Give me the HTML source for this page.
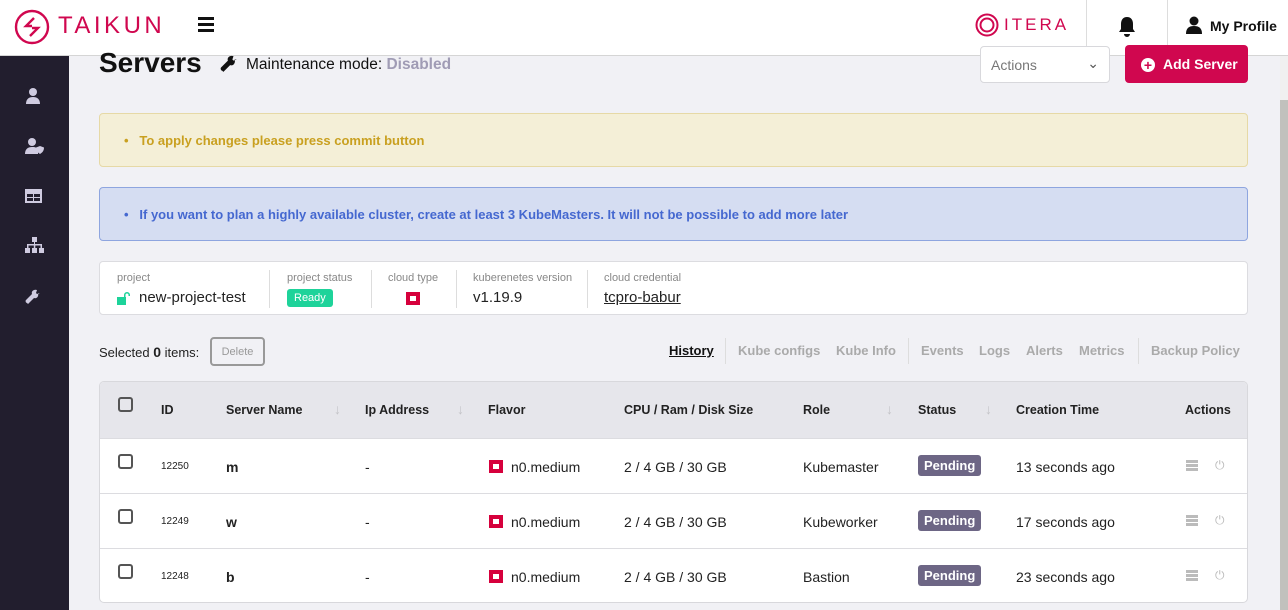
<!DOCTYPE html>
<html><head><meta charset="utf-8"><style>
*{box-sizing:border-box;margin:0;padding:0}
body{width:1288px;height:610px;overflow:hidden;background:#f1f1f5;font-family:"Liberation Sans",sans-serif;color:#222;position:relative}
.abs{position:absolute}
.hdr{left:0;top:0;width:1288px;height:56px;background:#fff;border-bottom:1px solid #d5d5d5}
.side{left:0;top:56px;width:69px;height:554px;background:#221e2e}
.side svg{position:absolute;left:25px;fill:#cfcbe0}
.alert{left:99px;width:1149px;height:54px;border-radius:4px;font-size:13px;font-weight:bold;padding:19px 0 0 24px}
.card{left:99px;top:261px;width:1149px;height:54px;background:#fff;border:1px solid #dcdce0;border-radius:4px}
.lbl{font-size:11px;color:#888;position:absolute;top:10px}
.val{font-size:16px;color:#222;position:absolute;top:27px}
.sep{position:absolute;top:8px;width:1px;height:38px;background:#ddd}
.tabs span{position:absolute;top:343px;font-size:13px;color:#aaa;font-weight:bold}
.tsep{position:absolute;top:338px;width:1px;height:26px;background:#ddd}
.tbl{left:99px;top:381px;width:1149px;height:222px;background:#fff;border:1px solid #d8d8dc;border-radius:5px;overflow:hidden}
.th{position:absolute;left:0;top:0;width:100%;height:56px;background:#e6e6eb}
.h{position:absolute;font-size:12.5px;font-weight:bold;color:#222;top:21px}
.arr{position:absolute;top:19px;color:#c4c4c8;font-size:14px}
.row{position:absolute;left:0;width:100%;height:55px;border-top:1px solid #dcdce0}
.c{position:absolute;font-size:14px;top:20px;color:#222}
.cb{position:absolute;left:18px;top:15px;width:15px;height:15px;border:2px solid #555;border-radius:3px}
.pend{position:absolute;left:818px;top:16px;background:#6d6685;color:#fff;font-size:13px;font-weight:bold;padding:3px 6px;border-radius:3px}
.flav{position:absolute;left:389px;top:21px;width:14px;height:13px;background:#d6003c}
.flav:after{content:"";position:absolute;left:4px;top:4px;width:6px;height:5px;background:#fff}
.srv{position:absolute;left:1086px;top:21px;width:12px;height:11px;background:linear-gradient(#bbb 0 3px,#fff 3px 4px,#bbb 4px 7px,#fff 7px 8px,#bbb 8px)}
.pw{position:absolute;left:1115px;top:19px;font-size:12px;color:#bbb}
</style></head><body>
<div class="abs hdr">
 <svg class="abs" style="left:14px;top:9px" width="36" height="36" viewBox="0 0 36 36"><circle cx="18" cy="18" r="16" fill="none" stroke="#d0074f" stroke-width="2.4"/><path d="M20 9 L12 17 L18 17 M18 19 L24 19 L16 27" fill="none" stroke="#d0074f" stroke-width="2.4"/></svg>
 <div class="abs" style="left:58px;top:12px;font-size:24px;color:#d0074f;letter-spacing:3.5px">TAIKUN</div>
 <div class="abs" style="left:198px;top:17px;width:16px;height:3px;background:#111;box-shadow:0 6px 0 #111,0 12px 0 #111"></div>
 <svg class="abs" style="left:975px;top:13px" width="24" height="24" viewBox="0 0 24 24"><circle cx="12" cy="12" r="10.5" fill="none" stroke="#d0074f" stroke-width="2"/><circle cx="12" cy="12" r="6.5" fill="none" stroke="#d0074f" stroke-width="2"/></svg>
 <div class="abs" style="left:1004px;top:15px;font-size:17px;color:#d0074f;letter-spacing:3px">ITERA</div>
 <div class="abs" style="left:1086px;top:0;width:1px;height:55px;background:#ddd"></div>
 <div class="abs" style="left:1167px;top:0;width:1px;height:55px;background:#ddd"></div>
 <svg class="abs" style="left:1117px;top:16px" width="20" height="22" viewBox="0 0 20 22"><path d="M10 1c-4 0-6 3-6 7v5l-2 3h16l-2-3V8c0-4-2-7-6-7z M7 18a3 3 0 0 0 6 0z" fill="#111"/></svg>
 <svg class="abs" style="left:1186px;top:16px" width="16" height="18" viewBox="0 0 16 18"><circle cx="8" cy="5" r="4.5" fill="#111"/><path d="M0 18c0-6 3-8 8-8s8 2 8 8z" fill="#111"/></svg>
 <div class="abs" style="left:1210px;top:18px;font-size:14px;font-weight:bold;color:#111">My Profile</div>
</div>
<div class="abs side">
 <svg style="top:32px" width="16" height="16" viewBox="0 0 16 16"><circle cx="8" cy="4" r="4"/><path d="M1 16c0-5 3-7 7-7s7 2 7 7z"/></svg>
 <svg style="top:82px" width="20" height="16" viewBox="0 0 20 16"><circle cx="7" cy="4" r="4"/><path d="M0 16c0-5 3-7 7-7s5 1 6 2v5z"/><path d="M15 8l4 1.5c0 3-1.5 5-4 6.5-2.5-1.5-4-3.5-4-6.5z"/></svg>
 <svg style="top:133px" width="17" height="14" viewBox="0 0 17 14"><path d="M0 0h17v14H0z M2 5v3h6V5z M9 5v3h6V5z M2 9v3h6V9z M9 9v3h6V9z" fill-rule="evenodd"/></svg>
 <svg style="top:181px" width="19" height="17" viewBox="0 0 19 17"><rect x="7" y="0" width="5" height="5"/><rect x="9" y="5" width="1" height="3"/><rect x="2" y="7" width="15" height="1.5"/><rect x="2" y="7" width="1.5" height="4"/><rect x="15.5" y="7" width="1.5" height="4"/><rect x="8.8" y="7" width="1.5" height="4"/><rect x="0" y="11" width="5" height="5"/><rect x="7" y="11" width="5" height="5"/><rect x="14" y="11" width="5" height="5"/></svg>
 <svg style="top:233px" width="16" height="16" viewBox="0 0 16 16"><path d="M15 4l-3 1-1-1 1-3c-3-1-6 1-5 4L1 11c-1 1 0 3 1 3l1 1 6-6c3 1 5-2 4-5z"/></svg>
</div>
<div class="abs" style="left:99px;top:47px;font-size:28px;font-weight:bold;color:#111">Servers</div>
<svg class="abs" style="left:220px;top:55px" width="18" height="18" viewBox="0 0 16 16"><path d="M15 4l-3 1-1-1 1-3c-3-1-6 1-5 4L1 11c-1 1 0 3 1 3l1 1 6-6c3 1 5-2 4-5z" fill="#111"/></svg>
<div class="abs" style="left:246px;top:56px;font-size:15.5px;color:#111">Maintenance mode: <b style="color:#a09cb5">Disabled</b></div>
<div class="abs" style="left:980px;top:46px;width:130px;height:37px;background:#fff;border:1px solid #d8d8dc;border-radius:4px;font-size:14px;color:#777;padding:10px 0 0 10px">Actions<span style="position:absolute;right:10px;top:8px;color:#555">⌄</span></div>
<div class="abs" style="left:1125px;top:45px;width:123px;height:38px;background:#d0074f;border-radius:4px;color:#fff;font-size:14px;font-weight:bold;padding:11px 0 0 16px"><span style="display:inline-block;width:14px;height:14px;border-radius:50%;background:#fff;color:#d0074f;font-size:14px;line-height:14px;text-align:center;margin-right:8px;vertical-align:-1px">+</span>Add Server</div>
<div class="abs alert" style="top:113px;background:#f4efd7;border:1px solid #e6d9a6;color:#c9a020">•&nbsp;&nbsp;&nbsp;To apply changes please press commit button</div>
<div class="abs alert" style="top:187px;background:#d5ddf2;border:1px solid #8ea5df;color:#4568d0">•&nbsp;&nbsp;&nbsp;If you want to plan a highly available cluster, create at least 3 KubeMasters. It will not be possible to add more later</div>
<div class="abs card">
 <div class="lbl" style="left:17px">project</div>
 <svg style="position:absolute;left:17px;top:30px" width="14" height="13" viewBox="0 0 14 13"><path d="M7 4V3a3 3 0 0 1 6 0v1h-1.5V3a1.5 1.5 0 0 0-3 0v2H9v8H0V5h7z" fill="#1dd39a"/></svg>
 <div class="val" style="left:39px;font-size:15px">new-project-test</div>
 <div class="sep" style="left:169px"></div>
 <div class="lbl" style="left:187px">project status</div>
 <div style="position:absolute;left:187px;top:27px;background:#1ed39a;color:#fff;font-size:11px;padding:3px 7px;border-radius:3px">Ready</div>
 <div class="sep" style="left:271px"></div>
 <div class="lbl" style="left:288px">cloud type</div>
 <div class="flav" style="left:306px;top:30px"></div>
 <div class="sep" style="left:356px"></div>
 <div class="lbl" style="left:373px">kuberenetes version</div>
 <div class="val" style="left:373px;font-size:15px">v1.19.9</div>
 <div class="sep" style="left:487px"></div>
 <div class="lbl" style="left:504px">cloud credential</div>
 <div class="val" style="left:504px;font-size:15px;text-decoration:underline">tcpro-babur</div>
</div>
<div class="abs" style="left:99px;top:344px;font-size:13px;color:#222">Selected <b style="font-size:14px">0</b> items:</div>
<div class="abs" style="left:210px;top:337px;width:55px;height:29px;border:2px solid #999;border-radius:4px;font-size:11px;color:#999;text-align:center;padding-top:7px">Delete</div>
<div class="tabs">
 <span style="left:669px;color:#111;text-decoration:underline">History</span>
 <div class="tsep" style="left:725px"></div>
 <span style="left:738px">Kube configs</span>
 <span style="left:836px">Kube Info</span>
 <div class="tsep" style="left:908px"></div>
 <span style="left:921px">Events</span>
 <span style="left:979px">Logs</span>
 <span style="left:1026px">Alerts</span>
 <span style="left:1079px">Metrics</span>
 <div class="tsep" style="left:1138px"></div>
 <span style="left:1151px">Backup Policy</span>
</div>
<div class="abs tbl">
 <div class="th">
  <div class="cb"></div>
  <div class="h" style="left:61px">ID</div>
  <div class="h" style="left:126px">Server Name</div><div class="arr" style="left:234px">↓</div>
  <div class="h" style="left:265px">Ip Address</div><div class="arr" style="left:357px">↓</div>
  <div class="h" style="left:388px">Flavor</div>
  <div class="h" style="left:524px">CPU / Ram / Disk Size</div>
  <div class="h" style="left:703px">Role</div><div class="arr" style="left:786px">↓</div>
  <div class="h" style="left:818px">Status</div><div class="arr" style="left:885px">↓</div>
  <div class="h" style="left:916px">Creation Time</div>
  <div class="h" style="left:1085px">Actions</div>
 </div>
 <div class="row" style="top:56px"><div class="cb"></div><div class="c" style="left:61px;font-size:10px;top:22px">12250</div><div class="c" style="left:126px;font-weight:bold">m</div><div class="c" style="left:265px">-</div><div class="flav"></div><div class="c" style="left:411px">n0.medium</div><div class="c" style="left:524px">2 / 4 GB / 30 GB</div><div class="c" style="left:703px">Kubemaster</div><div class="pend">Pending</div><div class="c" style="left:916px">13 seconds ago</div><div class="srv"></div><div class="pw">⏻</div></div>
 <div class="row" style="top:111px"><div class="cb"></div><div class="c" style="left:61px;font-size:10px;top:22px">12249</div><div class="c" style="left:126px;font-weight:bold">w</div><div class="c" style="left:265px">-</div><div class="flav"></div><div class="c" style="left:411px">n0.medium</div><div class="c" style="left:524px">2 / 4 GB / 30 GB</div><div class="c" style="left:703px">Kubeworker</div><div class="pend">Pending</div><div class="c" style="left:916px">17 seconds ago</div><div class="srv"></div><div class="pw">⏻</div></div>
 <div class="row" style="top:166px"><div class="cb"></div><div class="c" style="left:61px;font-size:10px;top:22px">12248</div><div class="c" style="left:126px;font-weight:bold">b</div><div class="c" style="left:265px">-</div><div class="flav"></div><div class="c" style="left:411px">n0.medium</div><div class="c" style="left:524px">2 / 4 GB / 30 GB</div><div class="c" style="left:703px">Bastion</div><div class="pend">Pending</div><div class="c" style="left:916px">23 seconds ago</div><div class="srv"></div><div class="pw">⏻</div></div>
</div>
<div class="abs" style="left:1280px;top:56px;width:8px;height:554px;background:#f0f0f0"></div>
<div class="abs" style="left:1280px;top:100px;width:8px;height:510px;background:#c1c1bd"></div>
</body></html>
